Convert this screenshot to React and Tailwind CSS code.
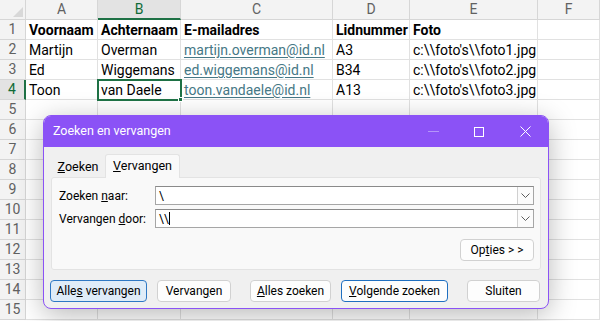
import React from "react";

const COLS = [
  { key: "A", w: "w-[72px]" },
  { key: "B", w: "w-[83px]" },
  { key: "C", w: "w-[152px]" },
  { key: "D", w: "w-[77px]" },
  { key: "E", w: "w-[128px]" },
  { key: "F", w: "flex-1" },
];

const ROWS = [
  { cells: ["Voornaam", "Achternaam", "E-mailadres", "Lidnummer", "Foto"], bold: true },
  { cells: ["Martijn", "Overman", "martijn.overman@id.nl", "A3", String.raw`c:\\foto's\\foto1.jpg`] },
  { cells: ["Ed", "Wiggemans", "ed.wiggemans@id.nl", "B34", String.raw`c:\\foto's\\foto2.jpg`] },
  { cells: ["Toon", "van Daele", "toon.vandaele@id.nl", "A13", String.raw`c:\\foto's\\foto3.jpg`] },
];

const Sheet = () => {
  const rows = [];
  for (let r = 1; r <= 15; r++) rows.push(r);

  return (
    <div className="font-['Roboto',sans-serif] text-[14px] text-black">
      <div className="flex h-5">
        <div className="relative w-[26px] h-5 bg-[#f3f3f3] border-r border-b border-[#d6d6d6]">
          <svg className="absolute right-[2px] bottom-[2px]" width="10" height="10" viewBox="0 0 10 10">
            <path d="M10 0 L10 10 L0 10 Z" fill="#d8d8d8" />
          </svg>
        </div>
        {COLS.map((c) => (
          <div
            key={c.key}
            className={`${c.w} h-5 flex items-center justify-center text-[14px] border-r ${
              c.key === "B"
                ? "bg-[#e3e3e3] text-[#0f6b37] border-b-2 border-b-[#1e7145] border-r-[#d6d6d6]"
                : "bg-[#f3f3f3] text-[#616161] border-b border-[#d6d6d6]"
            }`}
          >
            {c.key}
          </div>
        ))}
      </div>
      {rows.map((r) => {
        const data = ROWS[r - 1];
        return (
          <div key={r} className="flex h-5">
            <div
              className={`w-[26px] h-5 flex items-center justify-center text-[14px] border-b border-[#d6d6d6] ${
                r === 4
                  ? "bg-[#e3e3e3] text-[#0f6b37] border-r-2 border-r-[#1e7145]"
                  : "bg-[#f3f3f3] text-[#616161] border-r border-r-[#d6d6d6]"
              }`}
            >
              {r}
            </div>
            {COLS.map((c, i) => {
              const value = data && data.cells[i];
              const isLink = data && !data.bold && i === 2;
              const selected = r === 4 && i === 1;
              return (
                <div
                  key={c.key}
                  className={`${c.w} relative h-5 px-[3px] leading-5 whitespace-nowrap border-r border-b border-[#e1e1e1] ${
                    data && data.bold ? "font-bold" : ""
                  } ${selected ? "outline-2 outline-[#1e7145] -outline-offset-1 z-10" : ""}`}
                >
                  {isLink ? (
                    <span className="text-[#467886] underline underline-offset-2">{value}</span>
                  ) : (
                    value
                  )}
                  {selected && (
                    <span className="absolute -right-[3px] -bottom-[3px] w-[5px] h-[5px] bg-[#1e7145] border border-white" />
                  )}
                </div>
              );
            })}
          </div>
        );
      })}
    </div>
  );
};

const Chevron = () => (
  <div className="w-[16px] h-full flex items-center justify-center border-l border-[#d0d0d0] bg-[#fbfbfb]">
    <svg width="9" height="5" viewBox="0 0 9 5">
      <path d="M0.5 0.5 L4.5 4.5 L8.5 0.5" fill="none" stroke="#5c5c5c" strokeWidth="1" />
    </svg>
  </div>
);

const Field = ({ label, children }) => (
  <div className="flex items-center h-[19px]">
    <div className="w-[96px] text-[12px] text-black">{label}</div>
    <div className="flex-1 h-[19px] flex items-stretch bg-white border border-[#a6a6a6] border-t-[#8a8a8a]">
      <div className="flex-1 flex items-center pl-[3px] text-[12px]">{children}</div>
      <Chevron />
    </div>
  </div>
);

const Button = ({ w, children, variant }) => {
  const styles =
    variant === "focus"
      ? "bg-[#dfecf8] border-[#2e78c4]"
      : variant === "default"
      ? "bg-[#fdfdfd] border-[#1f6fc0]"
      : "bg-[#fdfdfd] border-[#d1d1d1]";
  return (
    <div
      className={`${w} h-[22px] flex items-center justify-center rounded-[4px] border text-[12px] text-black ${styles}`}
    >
      {children}
    </div>
  );
};

const Dialog = () => (
  <div className="absolute left-[43px] top-[115px] w-[506px] h-[194px] flex flex-col rounded-lg overflow-hidden border border-[#8b52f6] bg-[#f0f0f0] shadow-[0_6px_28px_rgba(0,0,0,0.28)] font-['Roboto',sans-serif]">
    <div className="h-[31px] shrink-0 flex items-center bg-[#8b52f6] text-white">
      <div className="pl-[9px] text-[12.5px] flex-1">Zoeken en vervangen</div>
      <div className="w-[46px] h-full flex items-center justify-center">
        <div className="w-[11px] h-px bg-[#b495f9]" />
      </div>
      <div className="w-[46px] h-full flex items-center justify-center">
        <div className="w-[10px] h-[10px] border border-white" />
      </div>
      <div className="w-[46px] h-full flex items-center justify-center">
        <svg width="11" height="11" viewBox="0 0 11 11">
          <path d="M0.5 0.5 L10.5 10.5 M10.5 0.5 L0.5 10.5" stroke="#ffffff" strokeWidth="1" />
        </svg>
      </div>
    </div>
    <div className="flex-1 pt-[7px]">
      <div className="flex h-[23px] ml-[7px] text-[12.5px]">
        <div className="w-[54px] flex items-center justify-center pt-[3px]">
          <span><u>Z</u>oeken</span>
        </div>
        <div className="w-[75px] flex items-center justify-center bg-[#f9f9f9] border border-b-0 border-[#e3e3e3] rounded-t-[3px] relative z-10 -mb-px">
          <span><u>V</u>ervangen</span>
        </div>
      </div>
      <div className="mx-[7px] h-[93px] bg-[#f9f9f9] border border-[#e3e3e3] rounded-[3px] pl-[7px] pr-[6px] pt-[8px] flex flex-col">
        <div className="flex flex-col gap-[4px]">
          <Field label={<span>Zoeken <u>n</u>aar:</span>}>
            <span>\</span>
          </Field>
          <Field label={<span>Vervangen <u>d</u>oor:</span>}>
            <span>\\</span>
            <span className="w-px h-[13px] bg-black" />
          </Field>
        </div>
        <div className="flex justify-end mt-[11px]">
          <Button w="w-[74px]">
            <span>Op<u>t</u>ies &gt; &gt;</span>
          </Button>
        </div>
      </div>
      <div className="flex mt-[10px] ml-[6px]">
        <Button w="w-[97px]" variant="focus">
          <span>Alle<u>s</u> vervangen</span>
        </Button>
        <div className="w-[10px]" />
        <Button w="w-[74px]">
          <span>Vervan<u>g</u>en</span>
        </Button>
        <div className="w-[19px]" />
        <Button w="w-[81px]">
          <span><u>A</u>lles zoeken</span>
        </Button>
        <div className="w-[10px]" />
        <Button w="w-[107px]" variant="default">
          <span><u>V</u>olgende zoeken</span>
        </Button>
        <div className="w-[19px]" />
        <Button w="w-[73px]">
          <span>Sluiten</span>
        </Button>
      </div>
    </div>
  </div>
);

export default function App() {
  return (
    <div className="relative w-[600px] h-[321px] overflow-hidden bg-white">
      <Sheet />
      <Dialog />
    </div>
  );
}
